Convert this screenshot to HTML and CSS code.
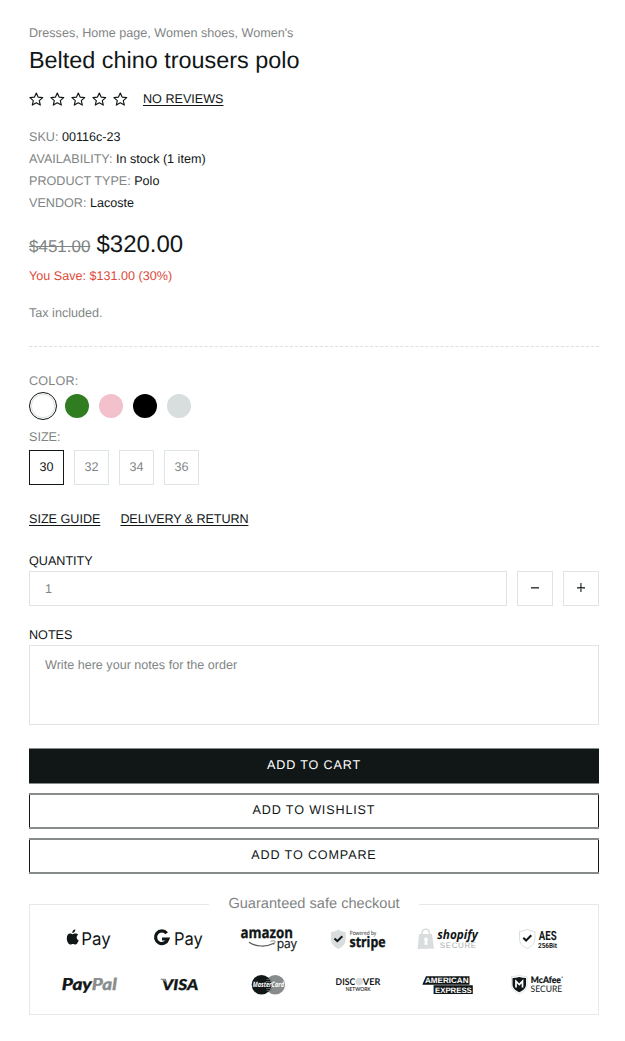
FILE: index.html
```
<!DOCTYPE html>
<html lang="en">
<head>
<meta charset="utf-8">
<title>Belted chino trousers polo</title>
<link rel="stylesheet" href="styles.css">
</head>
<body>
<svg width="0" height="0" class="defs">
  <symbol id="star" viewBox="0 0 15 14"><path d="M7.3 1 9.1 5.1 13.7 5.600 10.300 8.600 11.300 13.100 7.300 10.800 3.300 13.100 4.300 8.600.9 5.600 5.500 5.100Z" fill="none" stroke="#111617" stroke-width="1.150" stroke-linejoin="round"/></symbol>
</svg>
<main class="product">
  <div class="collections">Dresses, Home page, Women shoes, Women's</div>
  <h1 class="title">Belted chino trousers polo</h1>
  <div class="rating">
    <div class="stars">
      <svg><use href="#star"/></svg><svg><use href="#star"/></svg><svg><use href="#star"/></svg><svg><use href="#star"/></svg><svg><use href="#star"/></svg>
    </div>
    <a class="link reviews">NO REVIEWS</a>
  </div>
  <div class="meta">
    <div><span class="caps">SKU:</span> <b class="sku">00116c-23</b></div>
    <div><span class="caps">AVAILABILITY:</span> <b>In stock (1 item)</b></div>
    <div><span class="caps">PRODUCT TYPE:</span> <b>Polo</b></div>
    <div><span class="caps">VENDOR:</span> <b>Lacoste</b></div>
  </div>
  <div class="price"><s>$451.00</s><span>$320.00</span></div>
  <div class="save">You Save: $131.00 (30%)</div>
  <div class="tax">Tax included.</div>
  <div class="divider"></div>
  <div class="option-label color-label">COLOR:</div>
  <div class="swatches">
    <span class="swatch selected"></span>
    <span class="swatch green"></span>
    <span class="swatch pink"></span>
    <span class="swatch black"></span>
    <span class="swatch grey"></span>
  </div>
  <div class="option-label size-label">SIZE:</div>
  <div class="sizes">
    <span class="size active">30</span><span class="size">32</span><span class="size">34</span><span class="size">36</span>
  </div>
  <div class="links"><a class="link guide">SIZE GUIDE</a><a class="link delivery">DELIVERY &amp; RETURN</a></div>
  <div class="field-label quantity-label">QUANTITY</div>
  <div class="quantity">
    <div class="input">1</div>
    <div class="step"><svg width="10" height="11"><path d="M1 4h8v1H1z" fill="#434748"/><path d="M1 5h8v1H1z" fill="#919596"/></svg></div>
    <div class="step"><svg width="10" height="11"><path d="M1 4h8v1H1z" fill="#434748"/><path d="M1 5h8v1H1z" fill="#919596"/><path d="M4 0h1v9H4z" fill="#6e7273"/><path d="M5 0h1v9H5z" fill="#8a8e8f"/><path d="M4 4h2v1H4z" fill="#111617"/></svg></div>
  </div>
  <div class="field-label notes-label">NOTES</div>
  <div class="notes">Write here your notes for the order</div>
  <div class="actions">
    <div class="button primary">ADD TO CART</div>
    <div class="button">ADD TO WISHLIST</div>
    <div class="button">ADD TO COMPARE</div>
  </div>
  <section class="checkout">
    <h2 class="checkout-title">Guaranteed safe checkout</h2>
    <div class="logos">
      <svg class="logo" viewBox="0 0 90 40">
        <path d="M27 14.600c1 0 1.700.6 2.600.6s1.700-.7 3-.7c1 0 2 .5 2.600 1.300-2.200 1.400-1.900 4.500.500 5.500-.7 2-1.900 4.300-3.400 4.300-.9 0-1.300-.5-2.400-.5s-1.500.5-2.400.5c-1.800 0-3.700-3.400-3.700-6.200 0-3 1.500-4.800 3.200-4.800zM32.300 10.300c.2 2-1.200 3.700-3 3.800-.2-1.900 1.200-3.500 3-3.800z"/>
        <text x="38.300" y="25.600" class="inter" font-size="17.500" textLength="29.500" lengthAdjust="spacingAndGlyphs">Pay</text>
      </svg>
      <svg class="logo" viewBox="0 0 90 40">
        <path d="M33.700 14.200a6.300 6.300 0 1 0 1.200 5.800H29" fill="none" stroke="#111617" stroke-width="3.200"/>
        <text x="41" y="25.600" class="inter" font-size="17.500" textLength="28.800" lengthAdjust="spacingAndGlyphs">Pay</text>
      </svg>
      <svg class="logo" viewBox="0 0 90 40">
        <text x="17.500" y="19.300" class="open b" font-size="15.500" textLength="52.500" lengthAdjust="spacingAndGlyphs" stroke="#111617" stroke-width=".3">amazon</text>
        <path d="M26 23.300c7 4.600 17 5 25 1" fill="none" stroke="#55595a" stroke-width="1.200"/>
        <path d="M47.500 22.300c3-.8 5-.6 4.600.400-.2 1.300-.9 2.400-1.600 3.200" fill="none" stroke="#8a8e8f" stroke-width="1"/>
        <text x="53.700" y="28.600" class="open" font-size="13" textLength="20.200" lengthAdjust="spacingAndGlyphs" stroke="#111617" stroke-width=".2">pay</text>
      </svg>
      <svg class="logo" viewBox="0 0 90 40">
        <path d="M18 13c3-.3 5.300-1 7.400-2.500 2.100 1.500 4.400 2.200 7.300 2.500v7c0 4.500-2.700 7.500-7.300 10-4.700-2.500-7.400-5.500-7.400-10z" fill="#d9dddd"/>
        <path d="m21.500 19.500 2.800 2.700 5-5" fill="none" stroke="#111617" stroke-width="2"/>
        <text x="36.800" y="16" class="open" font-size="5.800" textLength="26.500" lengthAdjust="spacingAndGlyphs">Powered by</text>
        <text x="36.500" y="28.400" class="open b" font-size="14.500" textLength="36" lengthAdjust="spacingAndGlyphs" stroke="#111617" stroke-width=".4">stripe</text>
      </svg>
      <svg class="logo" viewBox="0 0 90 40">
        <path d="M16 15h13l2 14.500-16.300.5z" fill="#d9dddd"/>
        <path d="M19 17v-3c0-5 7.500-5 7.500 0v3" fill="none" stroke="#d9dddd" stroke-width="1.500"/>
        <circle cx="23" cy="20.500" r="1.900" fill="#fff"/><path d="M22.200 21h1.700l.8 4.800h-3.300z" fill="#fff"/>
        <text x="34.300" y="19.700" class="open b i" font-size="12.800" textLength="40.500" lengthAdjust="spacingAndGlyphs">shopify</text>
        <text x="36.700" y="29.200" font-size="8" textLength="36.500" fill="#a9aeae">SECURE</text>
      </svg>
      <svg class="logo" viewBox="0 0 90 40">
        <path d="M26.500 12.500c3-.3 5.500-.9 7.700-2.300 2.200 1.400 4.700 2 7.700 2.300v7c0 4.800-2.700 7.800-7.700 10-5-2.200-7.700-5.200-7.700-10z" fill="#fff" stroke="#d9dddd" stroke-width="1"/>
        <path d="m30.300 18.800 2.800 2.700 5.200-5.200" fill="none" stroke="#111617" stroke-width="2"/>
        <text x="45.800" y="21.200" class="roboto b" font-size="12.800" textLength="17.800" lengthAdjust="spacingAndGlyphs">AES</text>
        <text x="45" y="28.800" class="roboto b" font-size="7" textLength="18.800" lengthAdjust="spacingAndGlyphs">256Bit</text>
      </svg>
      <svg class="logo" viewBox="0 0 90 40">
        <text x="18.800" y="25" class="lato xb i" font-size="16.500" textLength="30" lengthAdjust="spacingAndGlyphs" stroke="#111617" stroke-width=".3">Pay</text>
        <text x="48.800" y="25" class="lato xb i" font-size="16.500" textLength="25" lengthAdjust="spacingAndGlyphs" fill="#888c8c" stroke="#888c8c" stroke-width=".3">Pal</text>
      </svg>
      <svg class="logo" viewBox="0 0 90 40">
        <text x="29" y="24.700" class="lato xb i" font-size="15" textLength="36.200" lengthAdjust="spacingAndGlyphs" stroke="#111617" stroke-width=".3">VISA</text>
        <path d="M27.500 13.800h4.700l1.800 5c-1.300-2.300-3.500-3.700-6.500-4.400z" fill="#888c8c"/>
      </svg>
      <svg class="logo" viewBox="0 0 90 40">
        <circle cx="52.200" cy="19.800" r="9.800" fill="#888c8c"/>
        <circle cx="38.500" cy="19.800" r="9.800" fill="#111617"/>
        <path d="M43.500 14.500h5M43 16.500h6M43 23.500h6M43.500 25.500h5" stroke="#686c6d" stroke-width=".8"/>
        <text x="29.700" y="22.100" class="open b i mc" font-size="7.500" textLength="31.300" lengthAdjust="spacingAndGlyphs">MasterCard</text>
      </svg>
      <svg class="logo" viewBox="0 0 90 40">
        <text x="22.600" y="19.900" class="lato b" font-size="9.300" textLength="19.500" lengthAdjust="spacingAndGlyphs">DISC</text>
        <circle cx="46.300" cy="16.600" r="3.800" fill="#d9dddd"/>
        <text x="49.800" y="19.900" class="lato b" font-size="9.300" textLength="17.500" lengthAdjust="spacingAndGlyphs">VER</text>
        <text x="32.800" y="26.300" class="lato sb" font-size="5.500" textLength="24.700" lengthAdjust="spacingAndGlyphs">NETWORK</text>
      </svg>
      <svg class="logo" viewBox="0 0 90 40">
        <path d="M23 11.300H66.500v8.400H19.300zM30.600 20.300h39.200v8.600H30.600z"/>
        <text x="22" y="18.300" class="amex" font-size="7.800" textLength="43.500" lengthAdjust="spacingAndGlyphs">AMERICAN</text>
        <text x="32" y="27.500" class="amex" font-size="7.800" textLength="36.800" lengthAdjust="spacingAndGlyphs">EXPRESS</text>
      </svg>
      <svg class="logo" viewBox="0 0 90 40">
        <path d="M18.500 11.500c3 0 5.500-.3 7.800-1.300 2.200 1 4.700 1.300 7.700 1.300v8c0 4.500-3 7.500-7.700 9.500-4.800-2-7.800-5-7.800-9.500z" fill="#fff" stroke="#d9dddd" stroke-width=".8"/>
        <path d="M19.500 13c2.500 0 4.800-.3 6.800-1 2 .7 4.200 1 6.700 1v6.500c0 3.500-2.700 6-6.700 7.800-4-1.800-6.800-4.300-6.800-7.800z"/>
        <path d="M23 22.500v-6.300l3.300 3.300 3.200-3.300v6.300" fill="none" stroke="#fff" stroke-width="1.700"/>
        <text x="37.800" y="18" class="lato xb" font-size="9" textLength="30" lengthAdjust="spacingAndGlyphs" stroke="#111617" stroke-width=".2">McAfee</text>
        <circle cx="69.200" cy="12.300" r=".8" fill="#777b7c"/>
        <text x="37.500" y="26.600" class="lato" font-size="9" textLength="31.800" lengthAdjust="spacingAndGlyphs">SECURE</text>
      </svg>
    </div>
  </section>
</main>
</body>
</html>
```
FILE: styles.css
```
* { box-sizing: border-box; }
body {
  margin: 0;
  background: #fff;
  color: #111617;
  font: 12.6px/22px "Liberation Sans", Arial, sans-serif;
  text-rendering: geometricPrecision;
}
.defs { position: absolute; }
.product { width: 570px; margin-left: 29px; padding-top: 22px; }
.collections, .meta, .tax, .option-label { color: #7f8585; }
.title { margin: 0; font-size: 23.4px; line-height: 32px; font-weight: 400; }
.rating { display: flex; align-items: center; gap: 15px; margin-top: 12px; height: 22px; }
.stars { display: flex; gap: 6px; }
.stars svg { width: 15px; height: 14px; }
.link { text-decoration: underline; text-underline-offset: 2px; }
.meta { margin-top: 16px; }
.meta b { font-weight: 400; color: #111617; }
.price { display: flex; align-items: baseline; gap: 6px; margin-top: 15px; height: 32px; line-height: 32px; font-size: 24px; }
.price s { font-size: 17px; color: #7f8585; }
.save { margin-top: 4px; color: #dc4a3a; }
.tax { margin-top: 15px; }
.divider { margin-top: 22px; border-top: 1px dashed #d9e1e1; }
.option-label { margin-top: 23px; }
.color-label { letter-spacing: .2px; }
.swatches { display: flex; gap: 10px; height: 28px; align-items: center; }
.swatch { width: 24px; height: 24px; border-radius: 50%; }
.selected { width: 28px; height: 28px; margin-right: -2px; border: 1px solid #111617; background: #fff; box-shadow: inset 0 0 0 1px #fff, inset 0 0 0 2px #dde2e2; }
.green { background: #2f7d20; }
.pink { background: #f2c1cb; }
.black { background: #000; }
.grey { background: #d8dddd; }
.size-label { margin-top: 6px; }
.sizes { display: flex; gap: 10px; margin-top: 2px; }
.size { width: 35px; height: 35px; border: 1px solid #dfe4e4; line-height: 33px; text-align: center; color: #7f8585; }
.active { border-color: #111617; color: #111617; }
.links { display: flex; gap: 20px; margin-top: 23px; }
.delivery { letter-spacing: -.1px; }
.field-label { line-height: 20px; }
.quantity-label { margin-top: 21px; }
.quantity { display: flex; gap: 10px; }
.input { flex: 1; height: 35px; border: 1px solid #dfe4e4; padding-left: 15px; line-height: 34px; color: #7f8585; }
.step { display: flex; justify-content: center; align-items: center; width: 36px; height: 35px; border: 1px solid #dfe4e4; }
.notes-label { margin-top: 19px; }
.notes { height: 80px; border: 1px solid #dfe4e4; padding: 8px 15px; color: #7f8585; }
.actions { display: grid; gap: 9px; margin-top: 23px; }
.button { height: 36px; border: solid #888b8c; border-width: 2px 0; box-shadow: inset 1px 0 #111617, inset -1px 0 #111617; text-align: center; line-height: 31px; letter-spacing: .85px; }
.primary { background: #111617; color: #fff; border-width: 1px 0; line-height: 33px; }
.checkout { height: 111px; margin-top: 30px; border: 1px solid #e6e9e9; }
.checkout-title { width: 210px; height: 22px; margin: -12px auto 0; background: #fff; color: #7f8585; font-size: 14.6px; font-weight: 400; text-align: center; }
.logos { display: grid; grid-template-columns: repeat(6, 90px); row-gap: 6px; margin: 4px 0 0 13px; }
.logo { display: block; width: 90px; height: 40px; fill: #111617; }
.inter { font-family: Inter, sans-serif; }
.open { font-family: "Open Sans", sans-serif; }
.roboto { font-family: Roboto, sans-serif; }
.lato { font-family: Lato, sans-serif; }
.sb { font-weight: 600; }
.b { font-weight: 700; }
.xb { font-weight: 900; }
.i { font-style: italic; }
.mc { fill: #fff; }
.amex { font-family: "Liberation Sans", sans-serif; font-weight: 700; fill: #fff; }
```
